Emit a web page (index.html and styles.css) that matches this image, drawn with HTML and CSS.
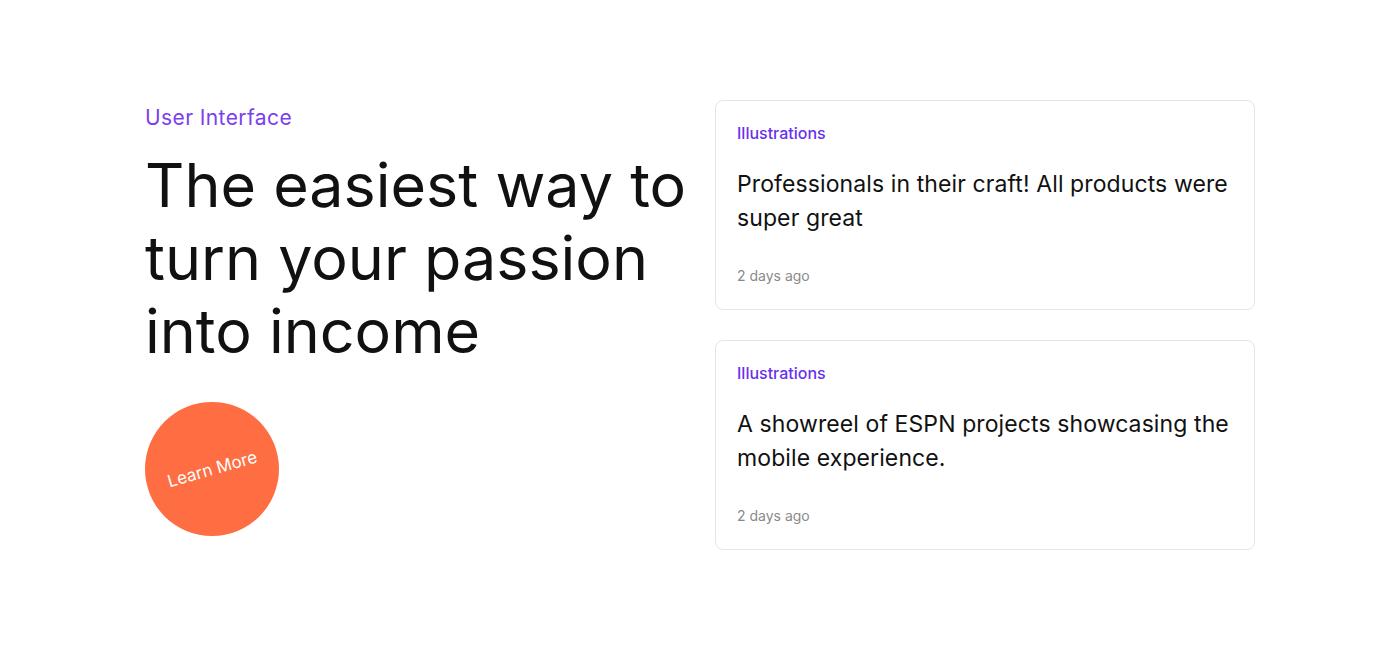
FILE: index.html
```html
<!DOCTYPE html>
<html lang="en">
<head>
<meta charset="utf-8">
<title>User Interface</title>
<link rel="stylesheet" href="styles.css">
</head>
<body>
<main class="page">
  <section class="hero">
    <p class="eyebrow">User Interface</p>
    <h1 class="headline">The easiest way to turn your passion into income</h1>
    <a class="cta" href="#"><span class="cta-label">Learn More</span></a>
  </section>
  <section class="cards">
    <article class="card">
      <p class="card-tag">Illustrations</p>
      <p class="card-text">Professionals in their craft! All products were super great</p>
      <p class="card-meta">2 days ago</p>
    </article>
    <article class="card">
      <p class="card-tag">Illustrations</p>
      <p class="card-text">A showreel of ESPN projects showcasing the mobile experience.</p>
      <p class="card-meta">2 days ago</p>
    </article>
  </section>
</main>
</body>
</html>
```

FILE: styles.css
```css
* { box-sizing: border-box; }
html, body { margin: 0; padding: 0; background: #ffffff; }
body {
  font-family: "Inter", "Open Sans", sans-serif;
  color: #111111;
  height: 650px;
}
.page {
  width: 1110px;
  margin: 0 auto;
  padding-top: 100px;
  display: grid;
  grid-template-columns: 540px 540px;
  column-gap: 30px;
}
.hero { padding-top: 4px; }
.eyebrow {
  margin: 0;
  font-size: 21px;
  line-height: 28px;
  color: #7b3ff0;
  font-weight: 400;
  letter-spacing: 0.4px;
}
.headline {
  margin: 17px 0 0;
  font-size: 61px;
  line-height: 73px;
  font-weight: 400;
  letter-spacing: 0;
  color: #111111;
  width: 580px;
}
.cta {
  margin-top: 34px;
  width: 134px;
  height: 134px;
  border-radius: 50%;
  background: #ff6d42;
  display: flex;
  align-items: center;
  justify-content: center;
  text-decoration: none;
}
.cta-label {
  color: #ffffff;
  font-size: 17px;
  transform: rotate(-16deg);
  display: block;
}
.cards {
  display: flex;
  flex-direction: column;
  gap: 30px;
}
.card {
  height: 210px;
  border: 1px solid #e4e4ec;
  border-radius: 8px;
  padding: 22px 21px 0;
}
.card-tag {
  margin: 0;
  font-size: 16px;
  line-height: 20px;
  font-weight: 500;
  color: #6a2ff0;
}
.card-text {
  margin: 24px 0 0;
  font-size: 23px;
  line-height: 34px;
  color: #111111;
  letter-spacing: 0.1px;
}
.card-meta {
  margin: 31px 0 0;
  font-size: 14px;
  line-height: 20px;
  color: #8a8a8a;
}
```
